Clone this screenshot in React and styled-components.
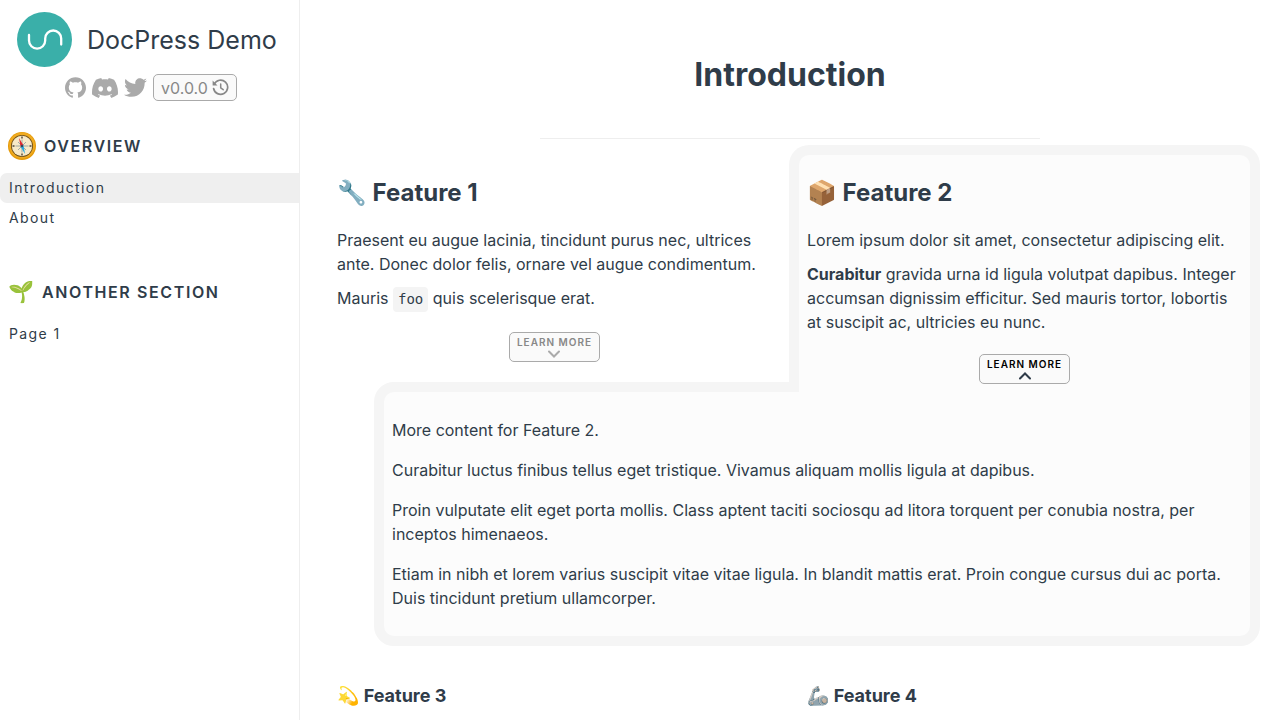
import React, { useState } from "react";
import styled, { createGlobalStyle, css } from "styled-components";
import { SiGithub, SiDiscord } from "react-icons/si";
import { FaTwitter } from "react-icons/fa";

const ink = "#2f3c49";
const muted = "#aaa";
const panelBorder = "#f5f5f5";
const panelFill = "#fcfcfc";

const GlobalStyle = createGlobalStyle`
  *, *::before, *::after { box-sizing: border-box; }
  body {
    margin: 0;
    background: #fff;
    color: ${ink};
    font-family: Inter, "Noto Color Emoji", sans-serif;
    font-size: 16px;
    line-height: 24px;
  }
  h1, h2, h3, p, ul { margin: 0; padding: 0; }
  a { color: inherit; text-decoration: none; }
`;

const Page = styled.div`
  display: flex;
  height: 100vh;
  overflow: hidden;
`;

const Sidebar = styled.aside`
  flex: 0 0 300px;
  border-right: 1px solid #eee;
`;

const Brand = styled.a`
  display: flex;
  align-items: center;
  gap: 15px;
  padding: 12px 0 0 17px;
  font-size: 25px;
  line-height: 30px;
`;

const Social = styled.div`
  display: flex;
  align-items: center;
  gap: 6px;
  margin-top: 7px;
  padding-left: 65px;
`;

const SocialLink = styled.a`
  display: flex;
  color: ${muted};
`;

const outlined = css`
  border: 1px solid ${muted};
  border-radius: 5px;
  background: #fafafa;
`;

const Version = styled.button`
  ${outlined}
  display: flex;
  align-items: center;
  gap: 4px;
  height: 27px;
  padding: 0 7px;
  color: #888;
  font: inherit;
`;

const Section = styled.section`
  margin-top: ${(p) => p.$top}px;
`;

const SectionTitle = styled.h2`
  display: flex;
  align-items: center;
  gap: 8px;
  height: 28px;
  margin-bottom: 13px;
  padding-left: 8px;
  font-size: 16px;
  font-weight: 600;
  letter-spacing: 0.1em;
`;

const SectionEmoji = styled.span`
  display: flex;
  width: ${(p) => p.$size}px;
  font-size: ${(p) => p.$size - 5}px;
  letter-spacing: 0;
`;

const NavLink = styled.a`
  display: block;
  padding: 0 9px;
  border-radius: 7px 0 0 7px;
  background: ${(p) => (p.$active ? "#efefef" : "transparent")};
  font-size: 14px;
  line-height: 30px;
  letter-spacing: 0.1em;
`;

const Main = styled.main`
  flex: 1;
  min-width: 0;
  padding: 50px 20px 0;
`;

const Title = styled.h1`
  font-size: 32px;
  line-height: 50px;
  text-align: center;
`;

const Rule = styled.hr`
  width: 500px;
  max-width: 100%;
  height: 1px;
  margin: 38px auto 6px;
  border: 0;
  background: #eee;
`;

const Features = styled.div`
  display: grid;
  grid-template-columns: 1fr 1fr;
`;

const Feature = styled.article`
  display: flex;
  flex-direction: column;
  align-items: flex-start;
  margin-left: -1px;
  padding: 8px;
  border: 10px solid transparent;
  border-bottom: 0;
  border-radius: 20px 20px 0 0;
  ${(p) =>
    p.$open &&
    css`
      position: relative;
      border-color: ${panelBorder};
      background: ${panelFill};
    `}
`;

const FeatureTitle = styled.h2`
  margin: 14px 0 20px;
  font-size: 24px;
  line-height: 31px;
`;

const SmallTitle = styled.h3`
  font-size: 18px;
  line-height: 24px;
`;

const Text = styled.p`
  margin-bottom: 10px;
`;

const Code = styled.code`
  display: inline-block;
  padding: 0 5px;
  border-radius: 4px;
  background: #f4f4f4;
  font-family: "DejaVu Sans Mono", monospace;
  font-size: 14px;
  line-height: 25px;
`;

const LearnMore = styled.button`
  ${outlined}
  display: flex;
  flex-direction: column;
  align-items: center;
  align-self: center;
  height: 30px;
  margin-top: 10px;
  padding: 2px 7px 0;
  color: ${(p) => (p.$open ? "#000" : "#888")};
  font-family: inherit;
  font-size: 10px;
  font-weight: 600;
  line-height: 14px;
  letter-spacing: 0.1em;
`;

const Details = styled.div`
  grid-column: 1 / -1;
  display: flex;
  flex-direction: column;
  gap: 16px;
  margin: -10px 0 20px 54px;
  padding: 26px 8px;
  border: 10px solid ${panelBorder};
  border-radius: 20px 0 20px 20px;
  background: ${panelFill};
`;

const Logo = () => (
  <svg width="55" height="55" viewBox="0 0 55 55" aria-hidden="true">
    <circle cx="27.5" cy="27.5" r="27.5" fill="#3aafa9" />
    <path
      d="M12 23v5.500a8.100 8.100 0 0 0 16.200 0v-2a8 8 0 0 1 16 0v6"
      fill="none"
      stroke="#fff"
      strokeWidth="2.300"
      strokeLinecap="round"
    />
  </svg>
);

const Compass = () => (
  <svg width="28" height="28" viewBox="0 0 28 28" aria-hidden="true">
    <circle cx="14" cy="14" r="14" fill="#e59a08" />
    <circle cx="14" cy="13.500" r="13" fill="#f0ab20" />
    <circle cx="14" cy="14" r="11" fill="#6b4d18" />
    <circle cx="14" cy="14" r="10.200" fill="#f7e9c8" />
    <path d="M14 4.500v2M14 21.500v2M4.500 14h2M21.500 14h2" stroke="#4d4435" strokeWidth="1.400" />
    <path d="M10 10l8 8M18 10l-8 8M14 7.500v13M7.500 14h13" stroke="#8c99a0" strokeWidth=".8" />
    <path d="M11 6l4.500 7.500-2.900 1.200z" fill="#e3262e" />
    <path d="M17 22l-4.500-7.500 3-1.200z" fill="#27a9e1" />
    <circle cx="14" cy="14" r="1.200" fill="#3b4652" />
  </svg>
);

const History = () => (
  <svg width="17" height="17" viewBox="0 0 17 17" fill="none" stroke="currentColor" aria-hidden="true">
    <path d="M2.200 5.100A7.100 7.100 0 1 1 1.600 9.500" strokeWidth="1.700" strokeLinecap="round" />
    <path d="M8.700 5v3.900l2.500 1.800" strokeWidth="1.500" strokeLinecap="round" strokeLinejoin="round" />
    <path d="M.6 1.500v4.900h4.900z" fill="currentColor" stroke="none" />
  </svg>
);

const Chevron = ({ up }) => (
  <svg width="14" height="9" viewBox="0 0 14 9" aria-hidden="true">
    <path
      d={up ? "M3 7.500l5-5 5 5" : "M2 2.500l5 5 5-5"}
      fill="none"
      stroke={up ? ink : muted}
      strokeWidth="2"
      strokeLinecap="round"
    />
  </svg>
);

const LearnButton = ({ open, onClick }) => (
  <LearnMore type="button" $open={open} aria-expanded={open} onClick={onClick}>
    LEARN MORE
    <Chevron up={open} />
  </LearnMore>
);

export default function App() {
  const [open, setOpen] = useState(2);
  const toggle = (id) => setOpen(open === id ? 0 : id);

  return (
    <>
      <GlobalStyle />
      <Page>
        <Sidebar>
          <Brand href="#">
            <Logo />
            DocPress Demo
          </Brand>
          <Social>
            <SocialLink href="#" aria-label="GitHub">
              <SiGithub size={21} />
            </SocialLink>
            <SocialLink href="#" aria-label="Discord">
              <SiDiscord size={26} />
            </SocialLink>
            <SocialLink href="#" aria-label="Twitter">
              <FaTwitter size={23} />
            </SocialLink>
            <Version type="button">
              v0.0.0
              <History />
            </Version>
          </Social>
          <nav>
            <Section $top={31}>
              <SectionTitle>
                <Compass />
                OVERVIEW
              </SectionTitle>
              <NavLink href="#introduction" $active>Introduction</NavLink>
              <NavLink href="#about">About</NavLink>
            </Section>
            <Section $top={45}>
              <SectionTitle>
                <SectionEmoji $size={26}>🌱</SectionEmoji>
                ANOTHER SECTION
              </SectionTitle>
              <NavLink href="#page-1">Page 1</NavLink>
            </Section>
          </nav>
        </Sidebar>

        <Main>
          <Title>Introduction</Title>
          <Rule />
          <Features>
            <Feature $open={open === 1}>
              <FeatureTitle>🔧 Feature 1</FeatureTitle>
              <Text>
                Praesent eu augue lacinia, tincidunt purus nec, ultrices ante. Donec
                dolor felis, ornare vel augue condimentum.
              </Text>
              <Text>
                Mauris <Code>foo</Code> quis scelerisque erat.
              </Text>
              <LearnButton open={open === 1} onClick={() => toggle(1)} />
            </Feature>
            <Feature $open={open === 2}>
              <FeatureTitle>📦 Feature 2</FeatureTitle>
              <Text>Lorem ipsum dolor sit amet, consectetur adipiscing elit.</Text>
              <Text>
                <b>Curabitur</b> gravida urna id ligula volutpat dapibus. Integer
                accumsan dignissim efficitur. Sed mauris tortor, lobortis at suscipit
                ac, ultricies eu nunc.
              </Text>
              <LearnButton open={open === 2} onClick={() => toggle(2)} />
            </Feature>
            {open === 2 && (
              <Details>
                <p>More content for Feature 2.</p>
                <p>
                  Curabitur luctus finibus tellus eget tristique. Vivamus aliquam
                  mollis ligula at dapibus.
                </p>
                <p>
                  Proin vulputate elit eget porta mollis. Class aptent taciti sociosqu
                  ad litora torquent per conubia nostra, per inceptos himenaeos.
                </p>
                <p>
                  Etiam in nibh et lorem varius suscipit vitae vitae ligula. In blandit
                  mattis erat. Proin congue cursus dui ac porta. Duis tincidunt pretium
                  ullamcorper.
                </p>
              </Details>
            )}
            <Feature>
              <SmallTitle>💫 Feature 3</SmallTitle>
            </Feature>
            <Feature>
              <SmallTitle>🦾 Feature 4</SmallTitle>
            </Feature>
          </Features>
        </Main>
      </Page>
    </>
  );
}
